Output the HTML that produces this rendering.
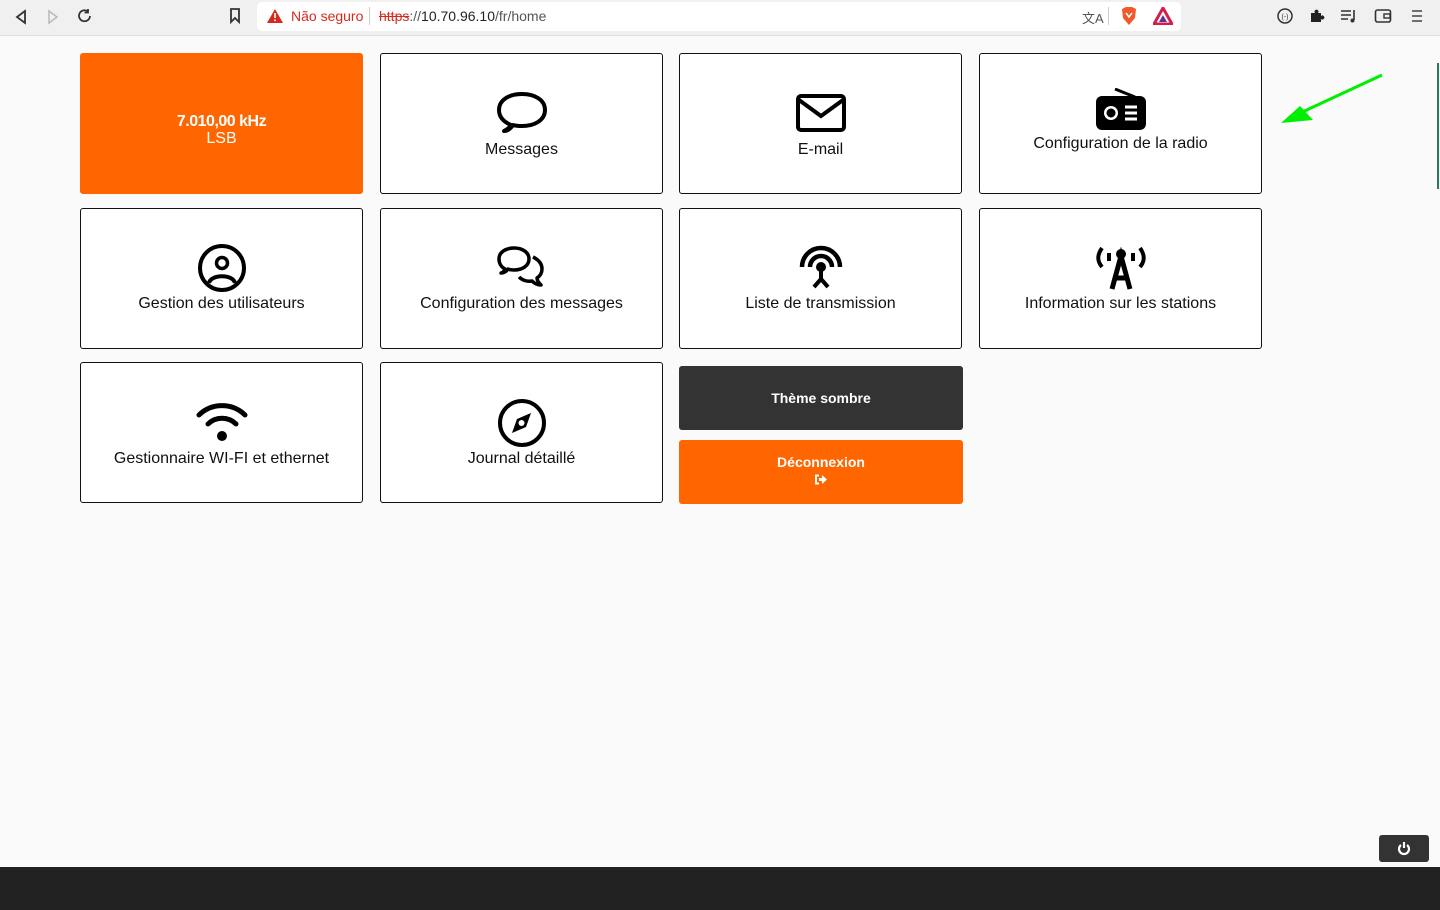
<!DOCTYPE html>
<html><head><meta charset="utf-8"><style>
*{box-sizing:border-box;margin:0;padding:0}
body{width:1440px;height:910px;background:#fafafa;font-family:"Liberation Sans",sans-serif;position:relative;overflow:hidden;color:#111}
.bar{position:absolute;left:0;top:0;width:1440px;height:36px;background:#f0f0f0;border-bottom:1px solid #ddd}
.url{position:absolute;left:257px;top:2px;width:924px;height:29px;background:#fff;border-radius:5px;font-size:14px}
.card{position:absolute;background:#fff;border:1px solid #111;border-radius:3px;width:283px;height:141px}
.lbl{position:absolute;left:0;right:0;text-align:center;font-size:16px}
.ic{position:absolute;left:50%;transform:translateX(-50%)}
.btn{position:absolute;left:679px;width:284px;border-radius:3px;color:#fff;text-align:center;font-weight:bold;font-size:14px}
</style></head><body>
<div class="bar">
 <svg style="position:absolute;left:14px;top:9px" width="14" height="16"><path d="M11 2 L3 8 L11 14Z" fill="none" stroke="#333" stroke-width="1.8"/></svg>
 <svg style="position:absolute;left:46px;top:9px" width="14" height="16"><path d="M3 2 L11 8 L3 14Z" fill="none" stroke="#bbb" stroke-width="1.6"/></svg>
 <svg style="position:absolute;left:77px;top:8px" width="16" height="16"><path d="M13 8 A5.5 5.5 0 1 1 11 3.5 M11 1 V4.5 H7.5" fill="none" stroke="#333" stroke-width="1.8"/></svg>
 <svg style="position:absolute;left:229px;top:8px" width="12" height="16"><path d="M2 1 H10 V14 L6 10 L2 14Z" fill="none" stroke="#333" stroke-width="1.8"/></svg>
 <div class="url">
  <svg style="position:absolute;left:10px;top:7px" width="16" height="14"><path d="M8 0 L16 14 H0Z" fill="#d42b1e"/><rect x="7.2" y="4" width="1.6" height="5" fill="#fff"/><rect x="7.2" y="10.5" width="1.6" height="1.6" fill="#fff"/></svg>
  <span style="position:absolute;left:34px;top:6px;color:#d42b1e">Não seguro</span>
  <span style="position:absolute;left:112px;top:5px;width:1px;height:18px;background:#ccc"></span>
  <span style="position:absolute;left:122px;top:6px;color:#555"><s style="color:#d42b1e">https</s>://<span style="color:#222">10.70.96.10</span>/fr/home</span>
  <span style="position:absolute;left:825px;top:6px;font-size:13px;color:#555">文A</span>
  <span style="position:absolute;left:851px;top:5px;width:1px;height:18px;background:#ccc"></span>
  <svg style="position:absolute;left:863px;top:4px" width="18" height="20"><path d="M2 3 L6 1 H12 L16 3 L15 12 L9 19 L3 12Z" fill="#f0592a"/><path d="M6 7 L9 11 L12 7" stroke="#fff" fill="none" stroke-width="1.5"/></svg>
  <svg style="position:absolute;left:896px;top:5px" width="20" height="18"><path d="M10 1 L19 17 H1Z" fill="none" stroke="#d31e4b" stroke-width="3"/><path d="M10 8 L14 15 H6Z" fill="#662d91"/></svg>
 </div>
 <svg style="position:absolute;left:1276px;top:7px" width="18" height="18"><circle cx="9" cy="9" r="7" fill="none" stroke="#333" stroke-width="1.5"/><text x="9" y="12" font-size="7" text-anchor="middle" fill="#333">(-)</text></svg>
 <svg style="position:absolute;left:1308px;top:7px" width="18" height="18"><path d="M3 6 H7 A2 2 0 1 1 10 6 H13 V9 A2 2 0 1 1 13 12 V15 H3Z" fill="#222"/></svg>
 <svg style="position:absolute;left:1340px;top:8px" width="18" height="16"><path d="M1 3 H11 M1 7 H11 M1 11 H8 M14 2 V12" stroke="#333" stroke-width="1.6"/><circle cx="12.5" cy="12.5" r="2" fill="#333"/></svg>
 <svg style="position:absolute;left:1374px;top:8px" width="18" height="16"><rect x="1.5" y="2" width="15" height="12" rx="2" fill="none" stroke="#333" stroke-width="1.6"/><rect x="10" y="6" width="6" height="4" fill="none" stroke="#333" stroke-width="1.4"/></svg>
 <svg style="position:absolute;left:1410px;top:9px" width="14" height="14"><path d="M2 2 H12 M2 7 H12 M2 12 H12" stroke="#444" stroke-width="1.6"/></svg>
</div>

<div class="card" style="left:80px;top:53px;background:#ff6600;border-color:#ff6600;color:#fff">
 <div class="lbl" style="top:59px;font-weight:bold;letter-spacing:-0.5px">7.010,00 kHz</div>
 <div class="lbl" style="top:76px">LSB</div>
</div>
<div class="card" style="left:380px;top:53px">
 <svg class="ic" style="top:37px" width="52" height="44" viewBox="0 0 52 44"><path d="M8 40 C12 38 14 36 15 34 C8 31 3 26 3 19 C3 9 13 3 26 3 C39 3 49 9 49 19 C49 29 39 35 26 35 C23 35 20 35 17 34 C15 37 12 40 8 40Z" fill="none" stroke="#000" stroke-width="4" stroke-linejoin="round"/></svg>
 <div class="lbl" style="top:87px">Messages</div>
</div>
<div class="card" style="left:679px;top:53px">
 <svg class="ic" style="top:40px" width="50" height="38"><rect x="2" y="2" width="46" height="34" rx="3" fill="none" stroke="#000" stroke-width="4"/><path d="M3 6 L25 22 L47 6" fill="none" stroke="#000" stroke-width="4"/></svg>
 <div class="lbl" style="top:87px">E-mail</div>
</div>
<div class="card" style="left:979px;top:53px">
 <svg class="ic" style="top:34px" width="52" height="42"><path d="M20 1 L40 9" stroke="#000" stroke-width="3"/><rect x="1" y="8" width="50" height="34" rx="6" fill="#000"/><circle cx="16" cy="25" r="7" fill="#fff"/><circle cx="16" cy="25" r="4.5" fill="#000"/><path d="M30 19 H42 M30 25 H42 M30 31 H42" stroke="#fff" stroke-width="3"/></svg>
 <div class="lbl" style="top:81px">Configuration de la radio</div>
</div>

<div class="card" style="left:80px;top:208px">
 <svg class="ic" style="top:34px" width="50" height="50"><circle cx="25" cy="25" r="22" fill="none" stroke="#000" stroke-width="4"/><circle cx="25" cy="20" r="5.5" fill="none" stroke="#000" stroke-width="3.5"/><path d="M12 40 C14 31 36 31 38 40" fill="none" stroke="#000" stroke-width="4"/></svg>
 <div class="lbl" style="top:86px">Gestion des utilisateurs</div>
</div>
<div class="card" style="left:380px;top:208px">
 <svg class="ic" style="top:36px" width="52" height="46"><path d="M5 28 C8 27 9 25 9 24 C5 22 3 18 3 14 C3 7 10 3 18 3 C26 3 33 7 33 14 C33 21 26 25 18 25 C16 25 14 25 12 24 C10 27 8 28 5 28Z" fill="none" stroke="#000" stroke-width="3.5" stroke-linejoin="round"/><path d="M37 12 C43 15 46 19 46 24 C46 28 44 31 41 33 C41 36 43 38 45 40 C41 40 38 38 36 36 C31 37 26 35 23 32" fill="none" stroke="#000" stroke-width="3.5" stroke-linejoin="round"/></svg>
 <div class="lbl" style="top:86px">Configuration des messages</div>
</div>
<div class="card" style="left:679px;top:208px">
 <svg class="ic" style="top:34px" width="50" height="48"><path d="M6 24 A19 19 0 0 1 44 24" fill="none" stroke="#000" stroke-width="4.5"/><path d="M14 24 A11 11 0 0 1 36 24" fill="none" stroke="#000" stroke-width="4.5"/><circle cx="25" cy="24" r="5" fill="#000"/><path d="M25 26 V36 M25 36 L18 44 M25 36 L32 44" stroke="#000" stroke-width="4"/></svg>
 <div class="lbl" style="top:86px">Liste de transmission</div>
</div>
<div class="card" style="left:979px;top:208px">
 <svg class="ic" style="top:36px" width="52" height="46"><path d="M7 3 C2 10 2 16 7 22 M45 3 C50 10 50 16 45 22" fill="none" stroke="#000" stroke-width="4"/><path d="M14 8 V16 M38 8 V16" stroke="#000" stroke-width="4"/><circle cx="26" cy="9" r="5" fill="#000"/><path d="M17 44 L26 11 L35 44 M20 33 H32" fill="none" stroke="#000" stroke-width="5"/></svg>
 <div class="lbl" style="top:86px">Information sur les stations</div>
</div>

<div class="card" style="left:80px;top:362px">
 <svg class="ic" style="top:38px" width="52" height="42"><path d="M3 14 A33 33 0 0 1 49 14" fill="none" stroke="#000" stroke-width="5" stroke-linecap="round"/><path d="M12 23 A20 20 0 0 1 40 23" fill="none" stroke="#000" stroke-width="5" stroke-linecap="round"/><circle cx="26" cy="35" r="5" fill="#000"/></svg>
 <div class="lbl" style="top:87px">Gestionnaire WI-FI et ethernet</div>
</div>
<div class="card" style="left:380px;top:362px">
 <svg class="ic" style="top:34px" width="52" height="52"><circle cx="26" cy="26" r="22" fill="none" stroke="#000" stroke-width="4"/><path d="M35 16 L30 30 L16 36 L21 22Z" fill="#000"/><circle cx="25.5" cy="26" r="3" fill="#fff"/></svg>
 <div class="lbl" style="top:87px">Journal détaillé</div>
</div>
<div class="btn" style="top:366px;height:64px;background:#333;line-height:64px">Thème sombre</div>
<div class="btn" style="top:440px;height:64px;background:#ff6600;padding-top:14px">Déconnexion
 <svg style="position:absolute;left:135px;top:34px" width="14" height="11"><path d="M5 1.5 H2 V9.5 H5" fill="none" stroke="#fff" stroke-width="2"/><path d="M5 4 H8 V1 L13 5.5 L8 10 V7 H5Z" fill="#fff"/></svg>
</div>

<svg style="position:absolute;left:1278px;top:70px" width="110" height="60"><path d="M104 5 L20 44" stroke="#00ee00" stroke-width="3"/><path d="M3 53 L22 36 L35 50Z" fill="#00ee00"/></svg>
<div style="position:absolute;left:1437px;top:63px;width:2px;height:126px;background:#2a7a5a"></div>

<div style="position:absolute;left:1379px;top:835px;width:50px;height:27px;background:#333;border-radius:3px">
 <svg style="position:absolute;left:18px;top:6px" width="14" height="15"><path d="M4 4 A5 5 0 1 0 10 4" fill="none" stroke="#fff" stroke-width="2.2"/><path d="M7 1 V7" stroke="#fff" stroke-width="2.2"/></svg>
</div>
<div style="position:absolute;left:0;top:867px;width:1440px;height:43px;background:#222"></div>
</body></html>
